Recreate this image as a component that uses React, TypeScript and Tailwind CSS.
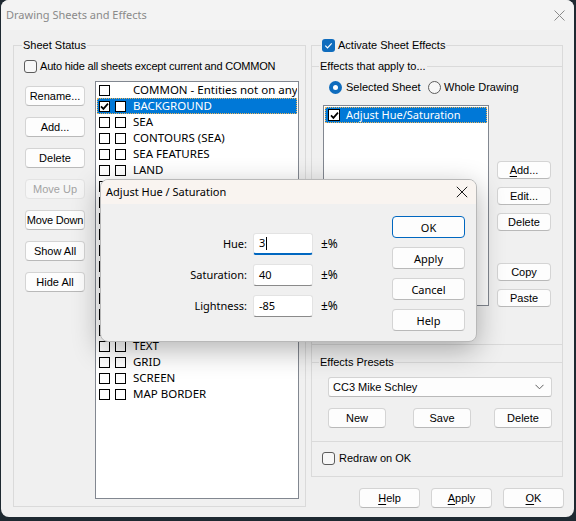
import React from "react";

const FA = "font-['Liberation_Sans',Arial,sans-serif]";
const FB = "font-['Noto_Sans',sans-serif]";

function WinCheck({ checked }: { checked?: boolean }) {
  return checked ? (
    <span className="flex h-[13px] w-[13px] shrink-0 items-center justify-center rounded-[3px] bg-[#0f6cbd]">
      <svg width="9" height="9" viewBox="0 0 9 9">
        <path d="M1.3 4.6 L3.5 6.8 L7.7 2.3" fill="none" stroke="white" strokeWidth="1.2" />
      </svg>
    </span>
  ) : (
    <span className="block h-[13px] w-[13px] shrink-0 rounded-[3px] border border-[#5c5c5c] bg-[#f7f7f7]" />
  );
}

function Radio({ on }: { on?: boolean }) {
  return on ? (
    <span className="flex h-[13px] w-[13px] shrink-0 items-center justify-center rounded-full bg-[#0f6cbd]">
      <span className="block h-[5px] w-[5px] rounded-full bg-white" />
    </span>
  ) : (
    <span className="block h-[13px] w-[13px] shrink-0 rounded-full border border-[#5c5c5c] bg-[#f7f7f7]" />
  );
}

function ClassicBox({ checked, big }: { checked?: boolean; big?: boolean }) {
  return (
    <span
      className={`flex shrink-0 items-center justify-center border border-black bg-white ${
        big ? "h-[12px] w-[12px]" : "h-[11px] w-[11px]"
      }`}
    >
      {checked && (
        <svg width="9" height="9" viewBox="0 0 9 9">
          <path d="M1 4.4 L3.4 6.9 L8 1.6" fill="none" stroke="black" strokeWidth="1.7" />
        </svg>
      )}
    </span>
  );
}

function Btn({
  children,
  className = "",
  variant = "normal",
}: {
  children: React.ReactNode;
  className?: string;
  variant?: "normal" | "primary" | "disabled";
}) {
  const v =
    variant === "primary"
      ? "border-[#0067c0] bg-[#fdfdfd] text-black"
      : variant === "disabled"
      ? "border-[#e3e3e3] bg-[#f6f6f6] text-[#a3a3a3]"
      : "border-[#d4d4d4] border-b-[#b9b9b9] bg-[#fdfdfd] text-black";
  return (
    <div className={`flex shrink-0 items-center justify-center rounded-[4px] border leading-none ${v} ${className}`}>
      {children}
    </div>
  );
}

type Sheet = { name: string; single?: boolean; sel?: boolean; a?: boolean };

const sheets: Sheet[] = [
  { name: "COMMON - Entities not on any sheet", single: true },
  { name: "BACKGROUND", sel: true, a: true },
  { name: "SEA" },
  { name: "CONTOURS (SEA)" },
  { name: "SEA FEATURES" },
  { name: "LAND" },
  { name: "CONTOURS (LAND)" },
  { name: "LAND FEATURES" },
  { name: "VEGETATION" },
  { name: "RIVERS" },
  { name: "ROADS" },
  { name: "BUILDINGS" },
  { name: "SYMBOLS" },
  { name: "SYMBOLS (FOREST)" },
  { name: "EFFECTS" },
  { name: "LABELS" },
  { name: "TEXT" },
  { name: "GRID" },
  { name: "SCREEN" },
  { name: "MAP BORDER" },
];

export default function App() {
  return (
    <div className="relative h-[521px] w-[576px] overflow-hidden bg-[#1e2931]">
      <div className={`relative ml-px flex h-[517px] w-[573px] flex-col overflow-hidden rounded-[8px] bg-[#f0f0f0] text-[11px] text-black ${FA}`}>
        {/* Title bar */}
        <div className="flex h-[30px] shrink-0 items-center justify-between bg-[#f3f3f3] pl-[5px] pr-[9px]">
          <span className={`${FB} text-[11px] text-[#8a8a8a]`}>Drawing Sheets and Effects</span>
          <svg width="11" height="11" viewBox="0 0 11 11">
            <path d="M0.5 0.5 L10.5 10.5 M10.5 0.5 L0.5 10.5" stroke="#8a8a8a" strokeWidth="1" />
          </svg>
        </div>

        {/* Content */}
        <div className="flex pl-[12px] pt-[15px]">
          {/* Sheet Status group */}
          <div className="relative h-[462px] w-[293px] shrink-0 border border-[#dadada]">
            <span className="absolute -top-[8px] left-[8px] bg-[#f0f0f0] px-[1px] leading-[14px]">Sheet Status</span>
            <div className="mt-[13px] flex h-[14px] items-center pl-[10px]">
              <WinCheck />
              <span className="ml-[3px] tracking-[-0.2px]">Auto hide all sheets except current and COMMON</span>
            </div>
            <div className="mt-[8px] flex pl-[11px]">
              <div className={`mt-[5px] flex flex-col gap-[11px] ${FA}`}>
                <Btn className="h-[20px] w-[60px]">Rename...</Btn>
                <Btn className="h-[20px] w-[60px]">Add...</Btn>
                <Btn className="h-[20px] w-[60px]">Delete</Btn>
                <Btn className="h-[20px] w-[60px]" variant="disabled">Move Up</Btn>
                <Btn className="h-[20px] w-[60px] tracking-[-0.2px]">Move Down</Btn>
                <Btn className="h-[20px] w-[60px]">Show All</Btn>
                <Btn className="h-[20px] w-[60px]">Hide All</Btn>
              </div>
              <div className={`ml-[10px] h-[418px] w-[204px] overflow-hidden border border-[#828790] bg-white ${FB} text-[11.5px]`}>
                {sheets.map((s) => (
                  <div
                    key={s.name}
                    className={`mx-px flex h-[16px] items-center overflow-hidden whitespace-nowrap pl-[2px] ${
                      s.sel ? "bg-[#0078d7] text-white outline-1 -outline-offset-1 outline-dotted outline-[#e9b35a]" : "text-black"
                    }`}
                  >
                    <ClassicBox checked={s.a} />
                    {s.single ? <span className="w-[16px] shrink-0" /> : <span className="ml-[5px] flex"><ClassicBox /></span>}
                    <span className="ml-[7px]">{s.name}</span>
                  </div>
                ))}
              </div>
            </div>
          </div>

          {/* Right column */}
          <div className="ml-[5px] flex flex-col">
            <div className="relative flex h-[432px] w-[252px] flex-col border border-[#dadada]">
              <span className="absolute -top-[8px] left-[9px] flex h-[14px] items-center bg-[#f0f0f0] px-[1px]">
                <WinCheck checked />
                <span className="ml-[3px]">Activate Sheet Effects</span>
              </span>

              {/* Effects that apply to */}
              <div className="relative mt-[20px] h-[279px] border-y border-[#dadada]">
                <span className="absolute -top-[8px] left-[7px] bg-[#f0f0f0] px-[1px] leading-[14px]">Effects that apply to...</span>
                <div className="mt-[13px] flex h-[14px] items-center pl-[17px]">
                  <div className="flex w-[99px] items-center">
                    <Radio on />
                    <span className="ml-[4px]">Selected Sheet</span>
                  </div>
                  <Radio />
                  <span className="ml-[3px]">Whole Drawing</span>
                </div>
                <div className="mt-[11px] flex pl-[11px]">
                  <div className={`h-[201px] w-[166px] border border-[#828790] bg-white ${FB}`}>
                    <div className="mx-px mt-px flex h-[16px] items-center bg-[#0078d7] pl-[3px] text-white outline-1 -outline-offset-1 outline-dotted outline-[#e9b35a]">
                      <ClassicBox checked big />
                      <span className="ml-[6px] text-[11px]">Adjust Hue/Saturation</span>
                    </div>
                  </div>
                  <div className="ml-[8px] mt-[56px] flex flex-col">
                    <Btn className="h-[18px] w-[54px]"><span><u className="underline-offset-2">A</u>dd...</span></Btn>
                    <Btn className="mt-[8px] h-[18px] w-[54px]">Edit...</Btn>
                    <Btn className="mt-[8px] h-[18px] w-[54px]">Delete</Btn>
                    <Btn className="mt-[32px] h-[18px] w-[54px]">Copy</Btn>
                    <Btn className="mt-[8px] h-[18px] w-[54px]">Paste</Btn>
                  </div>
                </div>
              </div>

              {/* Effects Presets */}
              <div className="relative mt-[17px] h-[80px] border-y border-[#dadada]">
                <span className="absolute -top-[8px] left-[7px] bg-[#f0f0f0] px-[1px] leading-[14px]">Effects Presets</span>
                <div className="ml-[16px] mt-[14px] flex h-[20px] w-[224px] items-center justify-between rounded-[3px] border border-[#d4d4d4] border-b-[#b9b9b9] bg-[#fdfdfd] pl-[4px] pr-[7px]">
                  <span>CC3 Mike Schley</span>
                  <svg width="9" height="6" viewBox="0 0 9 6">
                    <path d="M0.5 0.8 L4.5 4.8 L8.5 0.8" fill="none" stroke="#5f5f5f" strokeWidth="1" />
                  </svg>
                </div>
                <div className="mt-[11px] flex pl-[16px]">
                  <Btn className="h-[20px] w-[58px]">New</Btn>
                  <Btn className="ml-[27px] h-[20px] w-[58px]">Save</Btn>
                  <Btn className="ml-[23px] h-[20px] w-[58px]">Delete</Btn>
                </div>
              </div>

              <div className="mt-[9px] flex h-[14px] items-center pl-[10px]">
                <WinCheck />
                <span className="ml-[4px]">Redraw on OK</span>
              </div>
            </div>

            <div className="-mr-px mt-[11px] flex justify-end gap-[11px]">
              <Btn className="h-[20px] w-[61px]"><span><u className="underline-offset-2">H</u>elp</span></Btn>
              <Btn className="h-[20px] w-[61px]"><span><u className="underline-offset-2">A</u>pply</span></Btn>
              <Btn className="h-[20px] w-[61px]"><span><u className="underline-offset-2">O</u>K</span></Btn>
            </div>
          </div>
        </div>

        {/* Adjust Hue / Saturation dialog */}
        <div className={`absolute left-[99px] top-[179px] flex h-[163px] w-[377px] flex-col overflow-hidden rounded-[8px] border border-[#b8b8b8] bg-[#f0f0f0] shadow-[0_8px_28px_rgba(0,0,0,0.3)] ${FB} text-[11px]`}>
          <div className="flex h-[24px] shrink-0 items-center justify-between bg-[#f9f4f0] pl-[5px] pr-[8px]">
            <span className="text-[11px] text-black">Adjust Hue / Saturation</span>
            <svg width="12" height="12" viewBox="0 0 12 12">
              <path d="M0.8 0.8 L11.2 11.2 M11.2 0.8 L0.8 11.2" stroke="#1a1a1a" strokeWidth="1" />
            </svg>
          </div>
          <div className="flex">
            <div className="mt-[29px] flex flex-col gap-[9px]">
              {[
                { l: "Hue:", v: "3", f: true },
                { l: "Saturation:", v: "40" },
                { l: "Lightness:", v: "-85" },
              ].map((r) => (
                <div key={r.l} className="flex h-[22px] items-center">
                  <span className="w-[146px] text-right">{r.l}</span>
                  <div
                    className={`ml-[6px] flex h-[22px] w-[60px] items-center rounded-[3px] border border-[#e3e3e3] bg-white pl-[5px] ${
                      r.f ? "border-b-2 border-b-[#0067c0]" : "border-b-[#8a8a8a]"
                    }`}
                  >
                    <span>{r.v}</span>
                    {r.f && <span className="ml-px block h-[13px] w-px bg-black" />}
                  </div>
                  <span className="ml-[8px] text-[12px]">±%</span>
                </div>
              ))}
            </div>
            <div className="ml-auto mr-[11px] mt-[12px] flex flex-col gap-[9px]">
              <Btn className="h-[22px] w-[73px]" variant="primary">OK</Btn>
              <Btn className="h-[22px] w-[73px]">Apply</Btn>
              <Btn className="h-[22px] w-[73px]">Cancel</Btn>
              <Btn className="h-[22px] w-[73px]">Help</Btn>
            </div>
          </div>
        </div>
      </div>
    </div>
  );
}
